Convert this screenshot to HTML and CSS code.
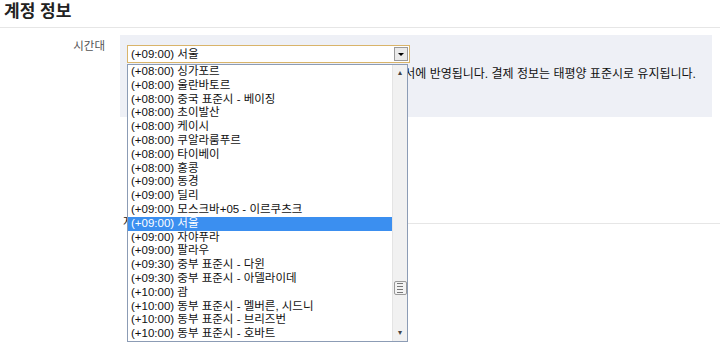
FILE: index.html
```html
<!DOCTYPE html>
<html lang="ko">
<head>
    <meta charset="UTF-8">
    <title>계정 정보</title>
    <link rel="stylesheet" href="styles.css">
</head>
<body>

    <div class="section-title">계정 정보</div>

    <div class="field-row">
        <div class="field-label">시간대</div>
        <div class="field-panel">
            <div class="select-box">
                <span class="select-value">(+09:00) 서울</span>
                <span class="select-btn"><span class="arrow-down"></span></span>
            </div>
            <div class="field-note">변경하신 시간대는 귀하 계정의 데이터와 모든 실적 보고서에 반영됩니다. 결제 정보는 태평양 표준시로 유지됩니다.</div>
        </div>
    </div>

    <div class="footer-row">
        <span class="footer-text">저장</span>
        <div class="footer-line"></div>
    </div>

    <!-- open dropdown list, drawn over the page -->
    <div class="dropdown">
        <ul class="options">
            <li>(+08:00) 싱가포르</li>
            <li>(+08:00) 울란바토르</li>
            <li>(+08:00) 중국 표준시 - 베이징</li>
            <li>(+08:00) 초이발산</li>
            <li>(+08:00) 케이시</li>
            <li>(+08:00) 쿠알라룸푸르</li>
            <li>(+08:00) 타이베이</li>
            <li>(+08:00) 홍콩</li>
            <li>(+09:00) 동경</li>
            <li>(+09:00) 딜리</li>
            <li>(+09:00) 모스크바+05 - 이르쿠츠크</li>
            <li class="selected">(+09:00) 서울</li>
            <li>(+09:00) 자야푸라</li>
            <li>(+09:00) 팔라우</li>
            <li>(+09:30) 중부 표준시 - 다윈</li>
            <li>(+09:30) 중부 표준시 - 아델라이데</li>
            <li>(+10:00) 괌</li>
            <li>(+10:00) 동부 표준시 - 멜버른, 시드니</li>
            <li>(+10:00) 동부 표준시 - 브리즈번</li>
            <li>(+10:00) 동부 표준시 - 호바트</li>
        </ul>
        <div class="scrollbar">
            <span class="sb-arrow">&#9652;</span>
            <span class="sb-thumb"><i></i><i></i><i></i><i></i></span>
            <span class="sb-arrow">&#9662;</span>
        </div>
    </div>

</body>
</html>
```

FILE: styles.css
```css
body {
    margin: 0;
    font-family: "Liberation Sans", "Noto Sans CJK KR", sans-serif;
    font-size: 11.5px;
    color: #111;
    background-color: #fff;
    position: relative;
    height: 343px;
    overflow: hidden;
}
.section-title {
    font-size: 17px;
    font-weight: bold;
    color: #222;
    line-height: 20px;
    padding: 2px 0 5px 4px;
    border-bottom: 1px solid #e6e6e6;
}
.field-row {
    display: flex;
    margin-top: 7px;
}
.field-label {
    width: 105px;
    text-align: right;
    color: #555;
    line-height: 14px;
    padding-top: 4px;
}
.field-panel {
    margin-left: 15px;
    width: 585px;
    height: 72px;
    padding: 10px 0 0 7px;
    background-color: #eef0f6;
}
.select-box {
    display: flex;
    justify-content: space-between;
    align-items: center;
    width: 277px;
    height: 16px;
    padding: 0 1px 0 3px;
    background-color: #fff;
    border: 1px solid #d9b46a;
}
.select-value {
    line-height: 14px;
}
.select-btn {
    display: flex;
    align-items: center;
    justify-content: center;
    width: 12px;
    height: 12px;
    border: 1px solid #9a9a9a;
    background-color: #eaeaea;
}
.arrow-down {
    width: 0;
    height: 0;
    border-left: 3px solid transparent;
    border-right: 3px solid transparent;
    border-top: 3px solid #000;
}
.field-note {
    margin-top: 4px;
    font-size: 12px;
    line-height: 15px;
    white-space: nowrap;
}
.footer-row {
    display: flex;
    align-items: flex-start;
    margin: 98px 0 0 123px;
}
.footer-text {
    line-height: 14px;
}
.footer-line {
    flex: 1;
    margin-top: 8px;
    border-top: 1px solid #e6e6e6;
}
.dropdown {
    position: absolute;
    left: 127px;
    top: 64px;
    width: 279px;
    height: 276px;
    display: flex;
    background-color: #fff;
    border: 1px solid #8c9cb5;
}
.options {
    list-style: none;
    margin: 0;
    padding: 0;
    flex: 1;
}
.options li {
    height: 13.8px;
    line-height: 13.8px;
    padding-left: 3px;
    white-space: nowrap;
}
.options li.selected {
    background-color: #3b8ff0;
    color: #fff;
}
.scrollbar {
    width: 14px;
    display: flex;
    flex-direction: column;
    align-items: center;
    justify-content: space-between;
    background-color: #f1f1f1;
    border-left: 1px solid #e4e4e4;
}
.sb-arrow {
    font-size: 8px;
    line-height: 16px;
    color: #444;
}
.sb-thumb {
    display: flex;
    flex-direction: column;
    justify-content: center;
    gap: 2px;
    width: 11px;
    height: 12px;
    margin-top: 200px;
    margin-bottom: auto;
    border: 1px solid #9a9a9a;
    border-radius: 2px;
    background-color: #f3f3f3;
}
.sb-thumb i {
    display: block;
    height: 1px;
    margin: 0 3px 0 2px;
    background-color: #777;
}
```
